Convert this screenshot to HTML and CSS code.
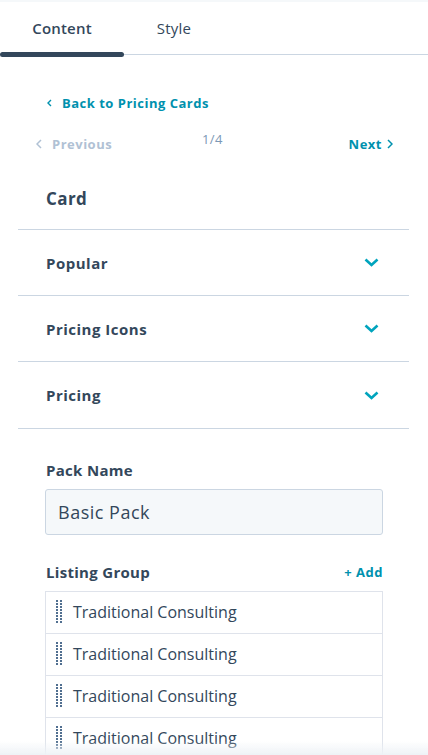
FILE: index.html
```html
<!DOCTYPE html>
<html>
<head>
<meta charset="utf-8">
<link rel="stylesheet" href="styles.css">
</head>
<body>
<div class="topstrip"></div>
<nav class="tabs">
  <div class="tab active">Content</div>
  <div class="tab">Style</div>
</nav>
<main class="panel">
  <div class="back">
    <svg class="chev-left" width="5" height="8" viewBox="0 0 5 8"><path d="M4 1 L1 4 L4 7" fill="none" stroke="#0091ae" stroke-width="1.4"/></svg>
    <span>Back to Pricing Cards</span>
  </div>
  <div class="pager">
    <div class="prev">
      <svg width="6" height="10" viewBox="0 0 6 10"><path d="M5 1 L1 5 L5 9" fill="none" stroke="#b0c1d4" stroke-width="1.5"/></svg>
      <span>Previous</span>
    </div>
    <div class="count">1/4</div>
    <div class="next">
      <span>Next</span>
      <svg width="6" height="10" viewBox="0 0 6 10"><path d="M1 1 L5 5 L1 9" fill="none" stroke="#0091ae" stroke-width="1.5"/></svg>
    </div>
  </div>
  <h2 class="card-title">Card</h2>
  <div class="acc">
    <span>Popular</span>
    <svg width="15" height="9" viewBox="0 0 15 9"><path d="M1.5 1.5 L7.5 7 L13.5 1.5" fill="none" stroke="#00a4bd" stroke-width="2.6"/></svg>
  </div>
  <div class="acc">
    <span>Pricing Icons</span>
    <svg width="15" height="9" viewBox="0 0 15 9"><path d="M1.5 1.5 L7.5 7 L13.5 1.5" fill="none" stroke="#00a4bd" stroke-width="2.6"/></svg>
  </div>
  <div class="acc">
    <span>Pricing</span>
    <svg width="15" height="9" viewBox="0 0 15 9"><path d="M1.5 1.5 L7.5 7 L13.5 1.5" fill="none" stroke="#00a4bd" stroke-width="2.6"/></svg>
  </div>
  <section class="fields">
    <label class="label">Pack Name</label>
    <div class="input">Basic Pack</div>
    <div class="group-head">
      <span class="label">Listing Group</span>
      <span class="add">+ Add</span>
    </div>
    <ul class="list">
      <li><svg class="handle" width="6" height="24" viewBox="0 0 6 24"><g fill="#516f90"><rect x="0" y="0" width="2" height="2"/><rect x="4" y="0" width="2" height="2"/><rect x="0" y="3" width="2" height="2"/><rect x="4" y="3" width="2" height="2"/><rect x="0" y="6" width="2" height="2"/><rect x="4" y="6" width="2" height="2"/><rect x="0" y="9" width="2" height="2"/><rect x="4" y="9" width="2" height="2"/><rect x="0" y="12" width="2" height="2"/><rect x="4" y="12" width="2" height="2"/><rect x="0" y="15" width="2" height="2"/><rect x="4" y="15" width="2" height="2"/><rect x="0" y="18" width="2" height="2"/><rect x="4" y="18" width="2" height="2"/><rect x="0" y="21" width="2" height="2"/><rect x="4" y="21" width="2" height="2"/></g></svg><span>Traditional Consulting</span></li>
      <li><svg class="handle" width="6" height="24" viewBox="0 0 6 24"><g fill="#516f90"><rect x="0" y="0" width="2" height="2"/><rect x="4" y="0" width="2" height="2"/><rect x="0" y="3" width="2" height="2"/><rect x="4" y="3" width="2" height="2"/><rect x="0" y="6" width="2" height="2"/><rect x="4" y="6" width="2" height="2"/><rect x="0" y="9" width="2" height="2"/><rect x="4" y="9" width="2" height="2"/><rect x="0" y="12" width="2" height="2"/><rect x="4" y="12" width="2" height="2"/><rect x="0" y="15" width="2" height="2"/><rect x="4" y="15" width="2" height="2"/><rect x="0" y="18" width="2" height="2"/><rect x="4" y="18" width="2" height="2"/><rect x="0" y="21" width="2" height="2"/><rect x="4" y="21" width="2" height="2"/></g></svg><span>Traditional Consulting</span></li>
      <li><svg class="handle" width="6" height="24" viewBox="0 0 6 24"><g fill="#516f90"><rect x="0" y="0" width="2" height="2"/><rect x="4" y="0" width="2" height="2"/><rect x="0" y="3" width="2" height="2"/><rect x="4" y="3" width="2" height="2"/><rect x="0" y="6" width="2" height="2"/><rect x="4" y="6" width="2" height="2"/><rect x="0" y="9" width="2" height="2"/><rect x="4" y="9" width="2" height="2"/><rect x="0" y="12" width="2" height="2"/><rect x="4" y="12" width="2" height="2"/><rect x="0" y="15" width="2" height="2"/><rect x="4" y="15" width="2" height="2"/><rect x="0" y="18" width="2" height="2"/><rect x="4" y="18" width="2" height="2"/><rect x="0" y="21" width="2" height="2"/><rect x="4" y="21" width="2" height="2"/></g></svg><span>Traditional Consulting</span></li>
      <li><svg class="handle" width="6" height="24" viewBox="0 0 6 24"><g fill="#516f90"><rect x="0" y="0" width="2" height="2"/><rect x="4" y="0" width="2" height="2"/><rect x="0" y="3" width="2" height="2"/><rect x="4" y="3" width="2" height="2"/><rect x="0" y="6" width="2" height="2"/><rect x="4" y="6" width="2" height="2"/><rect x="0" y="9" width="2" height="2"/><rect x="4" y="9" width="2" height="2"/><rect x="0" y="12" width="2" height="2"/><rect x="4" y="12" width="2" height="2"/><rect x="0" y="15" width="2" height="2"/><rect x="4" y="15" width="2" height="2"/><rect x="0" y="18" width="2" height="2"/><rect x="4" y="18" width="2" height="2"/><rect x="0" y="21" width="2" height="2"/><rect x="4" y="21" width="2" height="2"/></g></svg><span>Traditional Consulting</span></li>
    </ul>
  </section>
</main>
<div class="fade"></div>
</body>
</html>
```

FILE: styles.css
```css
* { box-sizing: border-box; }
html, body { margin: 0; padding: 0; }
body {
  width: 428px;
  height: 755px;
  overflow: hidden;
  background: #fff;
  font-family: "Open Sans", "Noto Sans", sans-serif;
  color: #33475b;
}
.topstrip { height: 2px; background: #f5f8fa; }
.tabs {
  display: flex;
  height: 53px;
  border-bottom: 1px solid #cbd6e2;
}
.tab {
  position: relative;
  display: flex;
  align-items: center;
  justify-content: center;
  font-size: 15px;
  padding-bottom: 1px;
  letter-spacing: 0.2px;
}
.tab:first-child { width: 124px; }
.tab:nth-child(2) { width: 100px; }
.tab.active { font-weight: 600; }
.tab.active::after {
  content: "";
  position: absolute;
  left: 0; right: 0;
  bottom: -3px;
  height: 5px;
  border-radius: 3px;
  background: #33475b;
}
.panel {
  margin: 0 19px 0 18px;
}
.back {
  display: flex;
  align-items: center;
  gap: 10px;
  padding: 38px 0 0 29px;
  height: 57px;
  color: #0091ae;
  font-weight: 700;
  font-size: 13px;
  letter-spacing: 0.5px;
}
.pager {
  display: flex;
  justify-content: space-between;
  align-items: flex-start;
  padding: 20px 0 0 18px;
  height: 70px;
  font-size: 13px;
  font-weight: 700;
  letter-spacing: 0.5px;
}
.prev { display: flex; align-items: center; gap: 10px; color: #b0c1d4; margin-top: 3px; }
.count { font-weight: 400; color: #7c98b6; font-size: 13px; letter-spacing: 0.3px; margin-left: -36px; margin-top: -2px; }
.next { display: flex; align-items: center; gap: 5px; color: #0091ae; margin-top: 3px; margin-right: 16px; }
.card-title {
  margin: 0;
  padding: 5px 0 0 28px;
  height: 47px;
  font-size: 17px;
  font-weight: 700;
  line-height: 24px;
  letter-spacing: 0.4px;
}
.acc {
  display: flex;
  justify-content: space-between;
  align-items: center;
  height: 66px;
  border-top: 1px solid #cbd6e2;
  padding: 0 30px 0 28px;
  font-size: 15px;
  font-weight: 700;
  letter-spacing: 0.5px;
}
.acc:nth-of-type(5) { height: 67px; }
.fields {
  border-top: 1px solid #cbd6e2;
  padding: 31px 26px 0 27px;
}
.label {
  display: block;
  font-size: 15px;
  font-weight: 700;
  line-height: 20px;
  padding-left: 1px;
  letter-spacing: 0.3px;
}
.input {
  margin-top: 9px;
  height: 46px;
  background: #f5f8fa;
  border: 1px solid #cbd6e2;
  border-radius: 3px;
  display: flex;
  align-items: center;
  padding: 0 12px;
  font-size: 18px;
  letter-spacing: 0.5px;
}
.group-head {
  display: flex;
  justify-content: space-between;
  align-items: center;
  margin-top: 27px;
  height: 20px;
}
.add { color: #0091ae; font-size: 13px; font-weight: 700; letter-spacing: 0.5px; }
.list {
  list-style: none;
  margin: 9px 0 0;
  padding: 0;
  border: 1px solid #dfe3eb;
  border-bottom: none;
}
.list li {
  display: flex;
  align-items: center;
  height: 42px;
  border-bottom: 1px solid #dfe3eb;
  padding-left: 10px;
  padding-bottom: 1px;
  font-size: 16px;
}
.handle { margin-right: 11px; }
.fade {
  position: fixed;
  left: 0; right: 0; bottom: 0;
  height: 14px;
  background: linear-gradient(to bottom, rgba(245,248,250,0), #eef2f6);
}
```
